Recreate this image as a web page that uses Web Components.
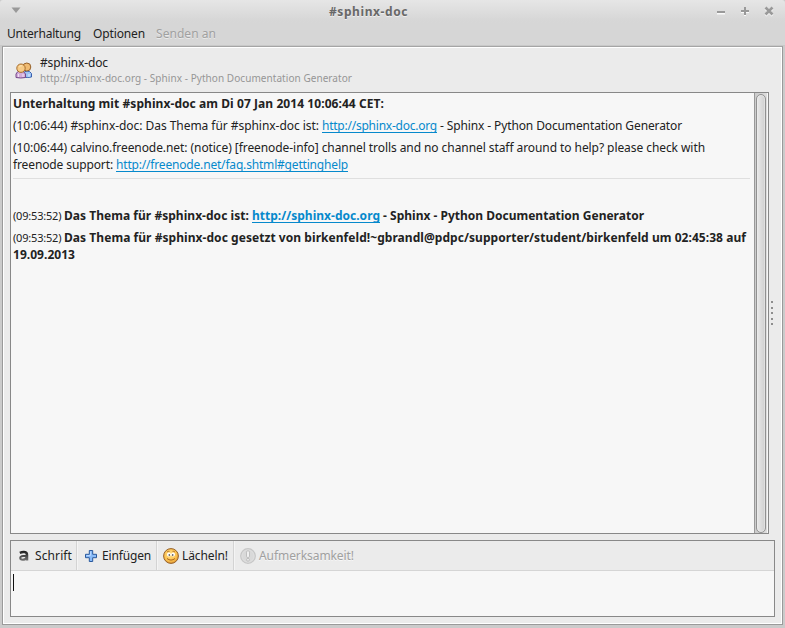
<!DOCTYPE html>
<html lang="de"><head><meta charset="utf-8"><title>#sphinx-doc</title>
<style>
html,body{margin:0;width:785px;height:628px;overflow:hidden}
body{font:12px/17px "Noto Sans","Open Sans",sans-serif;color:#222}
</style></head><body>
<chat-window></chat-window>
<script>
const define=(name,html,init)=>{
  const t=document.createElement('template');t.innerHTML=html;
  customElements.define(name,class extends HTMLElement{
    constructor(){super();this.attachShadow({mode:'open'}).append(t.content.cloneNode(true));}
    connectedCallback(){if(init)init(this);}
  });
};

/* A run of text set to the given advance width by even tracking. */
define('fit-text',`<style>:host{display:inline-block;white-space:pre;vertical-align:top}</style><slot></slot>`,el=>{
  const w=+el.getAttribute('w');el.style.letterSpacing='0px';
  const n=el.textContent.length,nat=el.getBoundingClientRect().width;
  el.style.letterSpacing=((w-nat)/n)+'px';el.style.width=w+'px';
});

define('chat-link',`<style>:host{color:#0689cc}fit-text{text-decoration:underline;text-decoration-thickness:1px;text-underline-offset:2px;text-decoration-skip-ink:none}</style><slot></slot>`,el=>{
  const f=document.createElement('fit-text');f.setAttribute('w',el.getAttribute('w'));f.textContent=el.textContent;
  el.shadowRoot.querySelector('slot').replaceWith(f);
});

define('title-bar',`<style>
:host{display:grid;grid-template-columns:329px 1fr auto;height:23px;align-items:center;background:linear-gradient(#e6e6e6,#d7d7d7 85%,#d6d6d6);font-weight:bold;color:#686868;text-shadow:0 1px #eee;border-radius:3px 3px 0 0}
.menu{margin:-3px 0 0 11px;width:10px;height:6px;display:block}
svg{display:block}
.b{display:flex;padding-right:11px;gap:12px;margin-top:-1px}
</style><svg class="menu" viewBox="0 0 10 6"><path d="M.5 .5h9L5 6z" fill="#999"/></svg>
<span><fit-text w="79">#sphinx-doc</fit-text></span>
<div class="b">
<svg width="12" height="12"><path d="M3 8.500h8" stroke="#fafafa" stroke-width="2"/><path d="M3 7h8" stroke="#999" stroke-width="2"/></svg>
<svg width="12" height="12"><path d="M3 7h8M7 4v7" stroke="#fafafa" stroke-width="2"/><path d="M3 6h8M7 2v8" stroke="#999" stroke-width="2"/></svg>
<svg width="12" height="12"><path d="M3.500 3.500l7 7M10.500 3.500l-7 7" stroke="#fafafa" stroke-width="2.600"/><path d="M3.500 2.500l7 7M10.500 2.500l-7 7" stroke="#999" stroke-width="2.600"/></svg>
</div>`);

define('menu-bar',`<style>:host{display:flex;height:22px;padding:2px 7px 0;gap:12px;box-sizing:border-box;background:#d6d6d6}.off{color:#a0a0a0;text-shadow:0 1px #eaeaea;margin-left:-1px}</style>
<fit-text w="74">Unterhaltung</fit-text><fit-text w="52">Optionen</fit-text><fit-text class="off" w="60">Senden an</fit-text>`);

define('people-icon',`<style>:host{display:block;width:18px;height:18px}svg{display:block}</style>
<svg width="18" height="18" viewBox="0 0 18 18">
<path d="M8 15v-3q1-3 4-3t4.500 2.500V15q-4 1-8.500 0z" fill="#9ec4f4" stroke="#385fae"/>
<path d="M14 12v3" stroke="#e0efff"/>
<circle cx="11.800" cy="5" r="4" fill="#f0bb72" stroke="#95602a"/>
<path d="M1 15.500V12q1-3 4.500-3t5 3v3.500q-4.700 1-9.500 0z" fill="#d3acd9" stroke="#75498a"/>
<path d="M3.500 12v3M8 12v3" stroke="#f1def3"/>
<circle cx="6" cy="6.200" r="4.200" fill="#f7cb87" stroke="#a56b2b"/><path d="M4.300 5q1-1.500 2.500-1.200" stroke="#fff1cd" fill="none"/></svg>`);

define('chat-header',`<style>:host{display:flex;height:44px;padding:6px 0 0 10px;box-sizing:border-box}people-icon{margin:8px 6px 0 2px;margin-left:1px;margin-right:7px}.l{display:flex;flex-direction:column}.s{font-size:10px;line-height:14px;color:#969696}.l>div:first-child{height:17px}</style>
<people-icon></people-icon><div class="l"><div><fit-text w="68">#sphinx-doc</fit-text></div>
<div class="s"><fit-text w="312">http://sphinx-doc.org - Sphinx - Python Documentation Generator</fit-text></div></div>`);

define('scroll-bar',`<style>:host{display:block;width:13px;border-left:1px solid #999;padding:0 1px;box-sizing:border-box;background:linear-gradient(90deg,#ccc 1px,#dedede)}
div{height:439px;margin-top:1px;box-sizing:border-box;border:1px solid #919191;border-radius:5px;background:linear-gradient(90deg,#e9e9e9,#d0d0d0);box-shadow:inset 0 0 0 1px #eee8}</style><div></div>`);

define('chat-log',`<style>
:host{display:grid;grid-template-columns:1fr 13px 1px;width:759px;height:442px;box-sizing:border-box;border:1px solid #888;background:#f7f7f7;margin-left:6px}
.m{padding:2px 0 0 2px}p{margin:0 0 5px}.line{display:flex;height:17px}hr{border:0;height:1px;background:#dfdfdf;margin:5px 4px 28px 0}
.small{font-size:11px}b{display:flex}
</style><div class="m">
<p class="line"><b><fit-text w="371">Unterhaltung mit #sphinx-doc am Di 07 Jan 2014 10:06:44 CET:</fit-text></b></p>
<p class="line"><fit-text w="309">(10:06:44) #sphinx-doc: Das Thema für #sphinx-doc ist: </fit-text><chat-link w="115">http://sphinx-doc.org</chat-link><fit-text w="245"> - Sphinx - Python Documentation Generator</fit-text></p>
<p><span class="line"><fit-text w="692">(10:06:44) calvino.freenode.net: (notice) [freenode-info] channel trolls and no channel staff around to help? please check with</fit-text></span>
<span class="line"><fit-text w="103">freenode support: </fit-text><chat-link w="232">http://freenode.net/faq.shtml#gettinghelp</chat-link></span></p>
<hr>
<p class="line"><fit-text class="small" w="51">(09:53:52) </fit-text><b><fit-text w="188">Das Thema für #sphinx-doc ist: </fit-text><chat-link w="128">http://sphinx-doc.org</chat-link><fit-text w="264"> - Sphinx - Python Documentation Generator</fit-text></b></p>
<p><span class="line"><fit-text class="small" w="51">(09:53:52) </fit-text><b><fit-text w="682">Das Thema für #sphinx-doc gesetzt von birkenfeld!~gbrandl@pdpc/supporter/student/birkenfeld um 02:45:38 auf</fit-text></b></span>
<span class="line"><b><fit-text w="62">19.09.2013</fit-text></b></span></p>
</div><scroll-bar></scroll-bar>`);

define('pane-grip',`<style>:host{display:flex;flex-direction:column;justify-content:center;gap:3.500px;width:2px;margin-left:2px}i{width:2px;height:2px;background:#8d8d8d}</style><i></i><i></i><i></i><i></i><i></i>`);

define('tool-button',`<style>:host{display:flex;align-items:center;box-sizing:border-box;height:29px;border-right:1px solid #d3d3d3;box-shadow:1px 0 #f4f4f4}:host([last]){border:0;box-shadow:none;color:#a0a0a0;text-shadow:0 1px #f7f7f7}</style><slot></slot>`);

define('chat-input',`<style>
:host{display:block;width:765px;height:77px;box-sizing:border-box;border:1px solid #888;background:#f7f7f7;margin:6px 0 0 6px}
nav{display:flex;height:29px;background:#ebebeb;border-bottom:1px solid #d5d5d5}
svg{flex:none;display:block}.caret{width:1px;height:17px;background:#111;margin:3px 0 0 2px}
</style><nav>
<tool-button style="width:66px"><svg width="16" height="16" style="margin:0 0 0 6px"><defs><linearGradient id="g" gradientUnits="userSpaceOnUse" x1="0" y1="3" x2="0" y2="13"><stop stop-color="#1c1c1c"/><stop offset="1" stop-color="#777"/></linearGradient></defs><path d="M2.800 4.900Q5.500 3.800 7.500 4.100Q10 4.400 10 7V12.500" fill="none" stroke="url(#g)" stroke-width="2.500"/><path d="M9.500 8H6.300Q3.200 8.300 3.200 10T5.700 11.800Q8.500 11.800 9.500 9.500" fill="none" stroke="url(#g)" stroke-width="1.900"/></svg><fit-text w="37" style="margin-left:2px">Schrift</fit-text></tool-button>
<tool-button style="width:80px"><svg width="14" height="14" style="margin-left:7px"><path d="M5.300 1.500h3.400v3.800h3.800v3.400h-3.800v3.800H5.300v-3.800H1.500V5.300h3.800z" fill="#8abcf8" stroke="#2a599d"/><path d="M6.500 2.500v4H2.500" fill="none" stroke="#b8d7ff"/></svg><fit-text w="49" style="margin-left:4px">Einfügen</fit-text></tool-button>
<tool-button style="width:77px"><svg width="16" height="16" style="margin-left:6px"><defs><radialGradient id="s" cx=".45" cy=".4" r=".6"><stop stop-color="#ffe08a"/><stop offset=".7" stop-color="#fbc250"/><stop offset="1" stop-color="#e39b35"/></radialGradient></defs><circle cx="8" cy="8" r="7.400" fill="url(#s)" stroke="#95602a"/><ellipse cx="5.900" cy="6.600" rx="1.900" ry="2" fill="#fff"/><ellipse cx="10.100" cy="6.600" rx="1.900" ry="2" fill="#fff"/><circle cx="6.300" cy="7" r=".8" fill="#222"/><circle cx="9.700" cy="7" r=".8" fill="#222"/><path d="M4 10.500q4 3.200 8 0" fill="none" stroke="#a8641e"/><path d="M4 4q1-1 2.500-.6M9.500 3.400Q11 3 12 4" fill="none" stroke="#a76720" stroke-width=".8"/></svg><fit-text w="46" style="margin-left:3px">Lächeln!</fit-text></tool-button>
<tool-button last><svg width="16" height="16" style="margin-left:6px"><circle cx="8" cy="8" r="7.300" fill="#d9d9d9" stroke="#c6c6c6" stroke-width="1.200"/><circle cx="8" cy="8" r="6" fill="none" stroke="#dfdfdf"/><rect x="6.500" y="2.800" width="3" height="6.700" rx="1.300" fill="#f0f0f0" stroke="#b5b5b5" stroke-width=".8"/><circle cx="8" cy="11.800" r="1.400" fill="#f0f0f0" stroke="#b5b5b5" stroke-width=".8"/></svg><fit-text w="95" style="margin-left:3px">Aufmerksamkeit!</fit-text></tool-button>
</nav><div class="caret"></div>`);

define('chat-window',`<style>
:host{display:flex;flex-direction:column;width:785px;height:628px;background:#cbcbcb}
main{margin:0 2px;width:781px;height:579px;box-sizing:border-box;border:1px solid #9a9a9a;background:#ebebeb;box-shadow:inset 0 0 0 1px #fff;border-top-color:#a5a5a5;padding:1px 0 0 1px}
.row{display:flex;height:442px}.edge{height:1px;background:#c8c8c8}
</style><title-bar></title-bar><menu-bar></menu-bar><div class="edge"></div>
<main><chat-header></chat-header><div class="row"><chat-log></chat-log><pane-grip></pane-grip></div><chat-input></chat-input></main>`);
</script></body></html>
